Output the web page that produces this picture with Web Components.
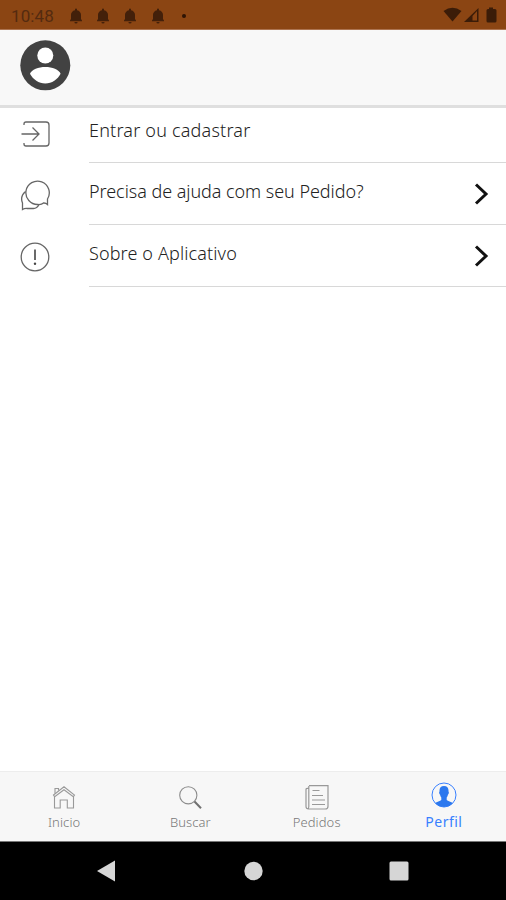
<!DOCTYPE html>
<html lang="pt-BR">
<head>
<meta charset="utf-8">
<title>Perfil</title>
<style>
body {
  margin: 0;
  background-color: #fff;
  font-family: "Noto Sans", "Open Sans", sans-serif;
}
</style>
</head>
<body>
<app-screen>
  <status-bar slot="top" time="10:48"></status-bar>
  <profile-header slot="top"></profile-header>
  <menu-item icon="login" style="--row-height: 55px; --spacing: 0.2px; --icon-offset: -4px; --label-offset: 10px">Entrar ou cadastrar</menu-item>
  <menu-item icon="chat" arrow style="--spacing: -0.05px">Precisa de ajuda com seu Pedido?</menu-item>
  <menu-item icon="info" arrow style="--spacing: 0.13px">Sobre o Aplicativo</menu-item>
  <tab-bar slot="bottom">
    <tab-item icon="home">Inicio</tab-item>
    <tab-item icon="search">Buscar</tab-item>
    <tab-item icon="orders">Pedidos</tab-item>
    <tab-item icon="profile" active>Perfil</tab-item>
  </tab-bar>
  <system-nav slot="bottom"></system-nav>
</app-screen>

<script>
const icons = {
  login: `<svg width="32" height="32" viewBox="0 0 32 32" fill="none" stroke="#666" stroke-width="1.3">
    <path d="M5 7V6q0-2 2-2h20q3 0 3 3v18q0 3-3 3H7q-2 0-2-2v-1"/>
    <path d="M2.500 16H20M13.500 9.500l6.500 6.500-6.500 6.500"/></svg>`,
  chat: `<svg width="32" height="32" viewBox="0 0 32 32" fill="none" stroke="#666" stroke-width="1.300">
    <path d="M28.500 25.500v-5.500A11.700 11.700 0 1 0 19 25.500q3.500.300 5.500-1.500 2.300-.2 4 1.500z"/>
    <path d="M6.500 12.500C2.500 16 2 20.500 3.500 24v6.500q2-1.200 4.500-1h6.500q3.500 0 5.500-4"/></svg>`,
  info: `<svg width="32" height="32" viewBox="0 0 32 32" fill="none" stroke="#666" stroke-width="1.3">
    <circle cx="16" cy="16" r="13.800"/><path d="M16 8.500v10.500" stroke="#444" stroke-width="1.600"/>
    <circle cx="16" cy="22.700" r="1.200" fill="#444" stroke="none"/></svg>`,
  home: `<svg width="26" height="26" viewBox="0 0 26 26" fill="none" stroke="#999" stroke-width="1.100">
    <path d="M3.500 12.500v11.500h5.700v-8h7.100v8H22.500V12.500"/><path d="M2.500 11 13 2.800 23.500 11l-1.200 1.800L13 5.700l-9.300 7.100z"/>
    <path d="M4 9.500V4.500H7.500v2"/></svg>`,
  search: `<svg width="26" height="26" viewBox="0 0 26 26" fill="none" stroke="#8c8c8c">
    <circle cx="11.300" cy="11.300" r="8.600" stroke-width="1.100"/>
    <path d="m17.500 17.500 6.500 6.700" stroke="#707070" stroke-width="2"/></svg>`,
  orders: `<svg width="26" height="26" viewBox="0 0 26 26" fill="none" stroke="#999" stroke-width="1.200">
    <path d="M5 1.700h19v20.500q0 2.800-2.800 2.800H4.500q-2.500 0-2.500-2.500V5.500q0-1.300 2.500-1.300M4.800 2v20.500q0 2-1.200 2.200"/>
    <path d="M8.500 6.500h7M8 11.500h11M8 16h13M8 20.500h13"/></svg>`,
  profile: `<svg width="26" height="26" viewBox="0 0 26 26">
    <circle cx="13" cy="13" r="12" fill="none" stroke="#3880ff" stroke-width="1"/>
    <path fill="#2c78ee" d="M13 4c3.300 0 4.700 1.900 4.500 5.500.7.500.3 2.400-.5 3-.3 1.300-.6 2.300-1.300 3v2.500c1 1.400 4.700 1.500 6.100 3.100a12 12 0 0 1-17.600 0c1.400-1.600 5.100-1.700 6.100-3.100v-2.500c-.7-.7-1-1.700-1.300-3-.8-.6-1.200-2.500-.5-3C8.300 5.900 9.700 4 13 4z"/></svg>`,
  bell: `<svg width="12" height="16" viewBox="0 0 12 16" fill="#43200a">
    <path d="M5 1.500a1 1 0 0 1 2 0v.7c2.500.5 4 2.300 4 4.600V11l1 1.400v.8H0v-.8L1 11V6.800C1 4.500 2.500 2.700 5 2.200zM4.400 14h3.200a1.600 1.600 0 0 1-3.200 0z"/></svg>`
};

class AppScreen extends HTMLElement {
  constructor() {
    super();
    this.attachShadow({ mode: "open" }).innerHTML = `
<style>
:host {
  display: flex;
  flex-direction: column;
  height: 900px;
  overflow: hidden;
}
main {
  flex: 1;
}
</style>
<slot name="top"></slot>
<main><slot></slot></main>
<slot name="bottom"></slot>`;
  }
}

class StatusBar extends HTMLElement {
  connectedCallback() {
    this.attachShadow({ mode: "open" }).innerHTML = `
<style>
:host {
  display: flex;
  align-items: center;
  justify-content: space-between;
  box-sizing: border-box;
  height: 30px;
  padding: 2px 8px 0 11px;
  border-bottom: 1px solid #ad7450;
  background-color: #8b4513;
  color: #542b10;
  font: 17px Roboto, sans-serif;
}
.left, .bells, .right {
  display: flex;
  align-items: center;
}
.left span {
  letter-spacing: 0.1px;
}
.bells {
  gap: 15.300px;
  margin-left: 16px;
}
.dot {
  width: 4px;
  height: 4px;
  margin-left: 3px;
  border-radius: 50%;
  background-color: #2e1404;
}
</style>
<div class="left">
  <span>${this.getAttribute("time")}</span>
  <div class="bells">${icons.bell.repeat(4)}<span class="dot"></span></div>
</div>
<div class="right">
  <svg width="55" height="18" viewBox="0 0 55 18" fill="#3b1c08">
    <path d="M.5 4Q9.500-2.500 18.500 4L9.500 14.500z"/>
    <path d="M21 15 35.500 1v14z"/><path d="M29.500 9l4.500-5v9.500h-4.500z" fill="#8b4513"/>
    <path d="M46 2V.5h4V2h2q1.500 0 1.500 1.500V14q0 1.500-1.500 1.500h-7q-1.500 0-1.500-1.500V3.500q0-1.500 1.500-1.500z"/>
  </svg>
</div>`;
  }
}

class ProfileHeader extends HTMLElement {
  constructor() {
    super();
    this.attachShadow({ mode: "open" }).innerHTML = `
<style>
:host {
  display: block;
  box-sizing: border-box;
  height: 78px;
  padding: 10px 20px;
  border-bottom: 3px solid #dfdfdf;
  background-color: #f8f8f8;
}
svg {
  display: block;
}
</style>
<svg width="51" height="51" viewBox="0 0 51 51">
  <circle cx="25.300" cy="25.300" r="25" fill="#424242"/>
  <circle cx="25.300" cy="15.500" r="8" fill="#fff"/>
  <path fill="#fff" d="M10 33.800C11.500 29.500 18.500 27 25.300 27s13.800 2.500 15.300 6.800c-3 5.800-8.700 9.700-15.300 9.700S13 39.600 10 33.800z"/>
</svg>`;
  }
}

class MenuItem extends HTMLElement {
  connectedCallback() {
    const arrow = this.hasAttribute("arrow")
      ? `<svg class="arrow" width="16" height="24" viewBox="0 0 16 24" fill="none" stroke="#111" stroke-width="3"><path d="m2 2.500 10 9.500-10 9.500"/></svg>`
      : "";
    this.attachShadow({ mode: "open" }).innerHTML = `
<style>
:host {
  display: flex;
  height: var(--row-height, 62px);
}
.icon {
  display: flex;
  align-items: center;
  width: 70px;
  padding-left: 19px;
}
.icon svg {
  margin-top: var(--icon-offset, 1px);
}
.content {
  display: flex;
  flex: 1;
  align-items: center;
  justify-content: space-between;
  padding-right: 16px;
  border-bottom: 1px solid #d8d8d8;
}
.label {
  padding-bottom: var(--label-offset, 6px);
  color: #222;
  font-size: 18px;
  font-weight: 300;
  letter-spacing: var(--spacing, 0);
  white-space: nowrap;
}
</style>
<div class="icon">${icons[this.getAttribute("icon")]}</div>
<div class="content"><span class="label"><slot></slot></span>${arrow}</div>`;
  }
}

class TabBar extends HTMLElement {
  constructor() {
    super();
    this.attachShadow({ mode: "open" }).innerHTML = `
<style>
:host {
  display: grid;
  grid-template-columns: repeat(4, 1fr);
  box-sizing: border-box;
  height: 70px;
  padding-left: 1px;
  border-top: 1px solid #ededed;
  background-color: #f7f7f7;
}
</style>
<slot></slot>`;
  }
}

class TabItem extends HTMLElement {
  connectedCallback() {
    this.attachShadow({ mode: "open" }).innerHTML = `
<style>
:host {
  display: flex;
  flex-direction: column;
  align-items: center;
  padding-top: 12px;
  color: #777;
  font-size: 13px;
  font-weight: 300;
  letter-spacing: 0.1px;
  line-height: 18px;
}
:host([active]) {
  padding: 10px 0 0 2px;
  color: #3880ff;
  font-size: 14px;
  font-weight: 400;
  letter-spacing: 0.5px;
}
svg {
  display: block;
  margin-bottom: 3px;
}
:host([active]) svg {
  margin-bottom: 5px;
}
</style>
${icons[this.getAttribute("icon")]}
<span><slot></slot></span>`;
  }
}

class SystemNav extends HTMLElement {
  constructor() {
    super();
    this.attachShadow({ mode: "open" }).innerHTML = `
<style>
:host {
  display: flex;
  align-items: center;
  justify-content: space-between;
  box-sizing: border-box;
  height: 59px;
  padding: 0 97px 0 96px;
  border-top: 1px solid #777;
  background-color: #000;
}
</style>
<svg width="20" height="22" viewBox="0 0 20 22" fill="#d6d6d6"><path d="M1 11 19 .500v21z"/></svg>
<svg width="20" height="20" viewBox="0 0 20 20" fill="#d6d6d6"><circle cx="10.500" cy="10" r="9.200"/></svg>
<svg width="20" height="20" viewBox="0 0 20 20" fill="#d6d6d6"><rect x=".5" y=".5" width="19" height="19" rx="1.500"/></svg>`;
  }
}

customElements.define("app-screen", AppScreen);
customElements.define("status-bar", StatusBar);
customElements.define("profile-header", ProfileHeader);
customElements.define("menu-item", MenuItem);
customElements.define("tab-bar", TabBar);
customElements.define("tab-item", TabItem);
customElements.define("system-nav", SystemNav);
</script>
</body>
</html>
